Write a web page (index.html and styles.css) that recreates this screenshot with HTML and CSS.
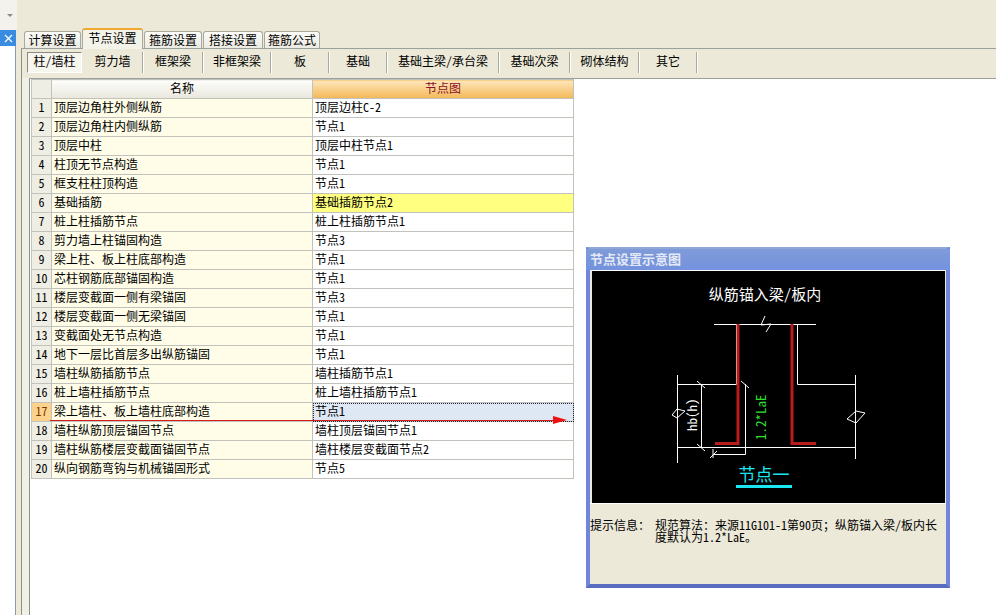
FILE: index.html
```html
<!DOCTYPE html>
<html lang="zh-CN">
<head>
<meta charset="utf-8">
<title>节点设置</title>
<link rel="stylesheet" href="styles.css">
</head>
<body>
<div class="app">
  <aside class="side">
    <div class="combo"><span class="combo-arrow"></span></div>
    <div class="close-bar">
      <svg class="close-x" width="9" height="9" viewBox="0 0 9 9"><path d="M1 1L8 8M8 1L1 8" stroke="#fff" stroke-width="1.2" fill="none"/></svg>
    </div>
    <div class="side-list"></div>
  </aside>
  <main class="main">
    <nav class="tabs">
      <span class="tab t1">计算设置</span>
      <span class="tab tab-active t2">节点设置</span>
      <span class="tab t3">箍筋设置</span>
      <span class="tab t4">搭接设置</span>
      <span class="tab t5">箍筋公式</span>
    </nav>
    <section class="panel">
      <div class="subtabs">
        <span class="sub sub-pressed s1">柱/墙柱</span>
        <span class="sub s2">剪力墙</span>
        <span class="sub s3">框架梁</span>
        <span class="sub s4">非框架梁</span>
        <span class="sub s5">板</span>
        <span class="sub s6">基础</span>
        <span class="sub s7">基础主梁/承台梁</span>
        <span class="sub s8">基础次梁</span>
        <span class="sub s9">砌体结构</span>
        <span class="sub s10">其它</span>
      </div>
      <div class="content">
        <div class="grid-wrap">
          <table class="grid">
            <thead>
              <tr><th class="num"></th><th class="name-h">名称</th><th class="node-h">节点图</th></tr>
            </thead>
            <tbody>
              <tr><td class="num">1</td><td class="name">顶层边角柱外侧纵筋</td><td class="node">顶层边柱C-2</td></tr>
              <tr><td class="num">2</td><td class="name">顶层边角柱内侧纵筋</td><td class="node">节点1</td></tr>
              <tr><td class="num">3</td><td class="name">顶层中柱</td><td class="node">顶层中柱节点1</td></tr>
              <tr><td class="num">4</td><td class="name">柱顶无节点构造</td><td class="node">节点1</td></tr>
              <tr><td class="num">5</td><td class="name">框支柱柱顶构造</td><td class="node">节点1</td></tr>
              <tr><td class="num">6</td><td class="name">基础插筋</td><td class="node node-yellow">基础插筋节点2</td></tr>
              <tr><td class="num">7</td><td class="name">桩上柱插筋节点</td><td class="node">桩上柱插筋节点1</td></tr>
              <tr><td class="num">8</td><td class="name">剪力墙上柱锚固构造</td><td class="node">节点3</td></tr>
              <tr><td class="num">9</td><td class="name">梁上柱、板上柱底部构造</td><td class="node">节点1</td></tr>
              <tr><td class="num">10</td><td class="name">芯柱钢筋底部锚固构造</td><td class="node">节点1</td></tr>
              <tr><td class="num">11</td><td class="name">楼层变截面一侧有梁锚固</td><td class="node">节点3</td></tr>
              <tr><td class="num">12</td><td class="name">楼层变截面一侧无梁锚固</td><td class="node">节点1</td></tr>
              <tr><td class="num">13</td><td class="name">变截面处无节点构造</td><td class="node">节点1</td></tr>
              <tr><td class="num">14</td><td class="name">地下一层比首层多出纵筋锚固</td><td class="node">节点1</td></tr>
              <tr><td class="num">15</td><td class="name">墙柱纵筋插筋节点</td><td class="node">墙柱插筋节点1</td></tr>
              <tr><td class="num">16</td><td class="name">桩上墙柱插筋节点</td><td class="node">桩上墙柱插筋节点1</td></tr>
              <tr><td class="num num-active">17</td><td class="name">梁上墙柱、板上墙柱底部构造</td><td class="node node-active">节点1</td></tr>
              <tr><td class="num">18</td><td class="name">墙柱纵筋顶层锚固节点</td><td class="node">墙柱顶层锚固节点1</td></tr>
              <tr><td class="num">19</td><td class="name">墙柱纵筋楼层变截面锚固节点</td><td class="node">墙柱楼层变截面节点2</td></tr>
              <tr><td class="num">20</td><td class="name">纵向钢筋弯钩与机械锚固形式</td><td class="node">节点5</td></tr>
            </tbody>
          </table>
          <svg class="arrow" width="530" height="14" viewBox="0 0 530 14">
            <path d="M0 7.500H512" stroke="#d81c1c" stroke-width="1" fill="none"/>
            <path d="M503 3L517 7L503 11Z" fill="#ee1111"/>
          </svg>
        </div>
      </div>
    </section>
  </main>
</div>
<section class="dialog">
  <header class="dialog-title">节点设置示意图</header>
  <svg class="drawing" width="353" height="232" viewBox="592 271 353 232">
    <rect x="592" y="271" width="353" height="232" fill="#000"/>
    <text class="d-title" x="765" y="300" text-anchor="middle">纵筋锚入梁/板内</text>
    <g fill="none" stroke="#fff" stroke-width="1">
      <path d="M714 324.500H816"/>
      <path d="M765 316L761 325L771 324L766 332"/>
      <path d="M736.500 324V384.500H677.500M677.500 375V463M797.500 324V384.500H855.500M855.500 375V459"/>
      <path d="M677 447.500H855"/>
      <path d="M701.500 384V447M697 381L705 388M697 444L705 451"/>
      <path d="M745.500 384V454.500H713M741 381L749 388M713 449V458M710 458L717 451"/>
      <path d="M672 415L677 409L685 411L677 418L672 415M847 419L856 411L865 413L856 423L847 419"/>
    </g>
    <g fill="none" stroke="#b81c1c" stroke-width="3">
      <path d="M738 324V443.500H715"/>
      <path d="M792 324V443.500H816"/>
    </g>
    <text class="d-dim" transform="translate(697 431) rotate(-90)">hb(h)</text>
    <text class="d-green" transform="translate(766 440) rotate(-90)">1.2*LaE</text>
    <text class="d-node" x="764" y="481" text-anchor="middle">节点一</text>
    <rect x="736" y="485" width="56" height="3" fill="#19e6f0"/>
  </svg>
  <div class="info">
    <span class="info-label">提示信息：</span>
    <p class="info-text">规范算法：来源11G101-1第90页；纵筋锚入梁/板内长度默认为1.2*LaE。</p>
  </div>
</section>
</body>
</html>
```
FILE: styles.css
```css
* { box-sizing: border-box; }
html, body { margin: 0; padding: 0; }
body {
  width: 996px;
  height: 615px;
  overflow: hidden;
  background: #ece9d8;
  color: #000;
  font: 12px/1 "Noto Sans Mono CJK SC", "Noto Sans CJK SC", "Liberation Mono", monospace;
}
.app { display: flex; height: 615px; }

/* left strip */
.side { width: 16px; flex: none; display: flex; flex-direction: column; }
.combo {
  height: 30px;
  width: 17px;
  background: #f3f2ec;
  display: flex;
  align-items: center;
  justify-content: center;
  padding-left: 2px;
}
.combo-arrow {
  width: 0; height: 0;
  border: 3px solid transparent;
  border-top: 3px solid #8a8a8a;
  border-bottom: 0;
}
.close-bar {
  height: 16px;
  width: 16px;
  background: #3a8ce0;
  display: flex;
  align-items: center;
  justify-content: center;
}
.side-list {
  flex: 1;
  background: #fff;
  border-right: 1px solid #8c9aa8;
}

/* main */
.main { flex: 1; min-width: 0; padding-left: 5px; display: flex; flex-direction: column; }
.tabs { height: 48px; display: flex; align-items: flex-end; padding-left: 3px; position: relative; z-index: 1; }
.tab {
  height: 17px;
  margin-right: 1px;
  background: linear-gradient(#fbfbf8, #ecebe2);
  border: 1px solid #a8a89c;
  border-bottom: 0;
  border-radius: 3px 3px 0 0;
  text-align: center;
  line-height: 16px;
}
.t1 { width: 57px; }
.t2 { width: 61px; }
.t3 { width: 58px; }
.t4 { width: 60px; }
.t5 { width: 56px; }
.tab-active {
  height: 21px;
  margin-bottom: -1px;
  background: #f4f3ea;
  border: 1px solid #a8a89c;
  border-top: 2px solid #efa92f;
  border-bottom: 0;
  line-height: 15px;
}
.panel {
  flex: 1;
  min-height: 0;
  background: #f0f0e4;
  border-top: 1px solid #9aa09c;
  border-left: 1px solid #8e8e8e;
  display: flex;
  flex-direction: column;
}
.subtabs {
  height: 29px;
  background: #ece9d8;
  display: flex;
  align-items: flex-start;
  padding: 3px 0 0 5px;
  flex: none;
}
.sub {
  height: 21px;
  text-align: center;
  line-height: 17px;
  border-right: 1px solid #a8a89c;
  box-shadow: 1px 0 0 #fff;
  margin-right: 1px;
}
.s1 { width: 55px; }
.s2 { width: 60px; }
.s3 { width: 59px; }
.s4 { width: 67px; }
.s5 { width: 57px; }
.s6 { width: 57px; }
.s7 { width: 111px; }
.s8 { width: 70px; }
.s9 { width: 68px; }
.s10 { width: 57px; }
.sub-pressed {
  background: #f6f5ee;
  border: 1px solid #fff;
  border-top: 1px solid #8a8a80;
  border-left: 1px solid #8a8a80;
  margin-right: 1px;
  box-shadow: 4px 0 0 #ece9d8;
  line-height: 16px;
}
.content { flex: 1; min-height: 0; padding-left: 7px; }
.grid-wrap {
  position: relative;
  height: 100%;
  background: #fff;
  border-left: 1px solid #8e8e8e;
  border-top: 1px solid #9aa09c;
  padding-left: 1px;
}
.grid {
  border-collapse: collapse;
  table-layout: fixed;
  width: 543px;
}
.grid th, .grid td {
  height: 19px;
  padding: 0 0 2px;
  border: 1px solid #c2c2bc;
  font-weight: 400;
  white-space: nowrap;
  overflow: hidden;
}
.grid th { text-align: center; background: linear-gradient(#fdfdfb, #e9e7dc); }
.grid th.node-h { background: linear-gradient(#fde7bb, #f3b757); color: #8a0f2a; }
.grid .num { width: 20px; text-align: center; background: #efeee4; }
.grid .name-h { width: 261px; }
.grid .name { background: #fffde8; padding-left: 2px; }
.grid .node { background: #fff; padding-left: 2px; }
.grid .node-yellow { background: #ffff80; }
.grid .num-active { background: #fcd28c; color: #7a3a00; }
.grid .node-active { background: #dee7f4; outline: 1px dotted #223; outline-offset: -1px; }
.arrow { position: absolute; left: 20px; top: 334px; }

/* floating window */
.dialog {
  position: absolute;
  left: 586px;
  top: 247px;
  width: 364px;
  height: 341px;
  background: #ece9d8;
  border: 4px solid #6f86dc;
  border-top: 2px solid #8fa6d8;
  border-bottom-color: #5a6cc0;
  display: flex;
  flex-direction: column;
}
.dialog-title {
  height: 21px;
  margin: 0 -4px;
  padding-left: 4px;
  background: linear-gradient(#7f9bd8, #7492de);
  color: #e4e9f6;
  font-size: 13px;
  font-weight: 700;
  line-height: 20px;
  flex: none;
}
.drawing {
  display: block;
  flex: none;
  margin-left: 2px;
  border-top: 1px solid #fff;
  box-sizing: content-box;
}
.d-title { fill: #fff; font-size: 15px; }
.d-dim { fill: #fff; font-size: 13px; }
.d-green { fill: #2fe02f; font-size: 13px; }
.d-node { fill: #19e6f0; font-size: 17px; }
.info {
  display: flex;
  padding-top: 15px;
  line-height: 12px;
  border-top: 1px solid #fff;
}
.info-label { width: 65px; flex: none; }
.info-text { margin: 0; width: 288px; }
```
